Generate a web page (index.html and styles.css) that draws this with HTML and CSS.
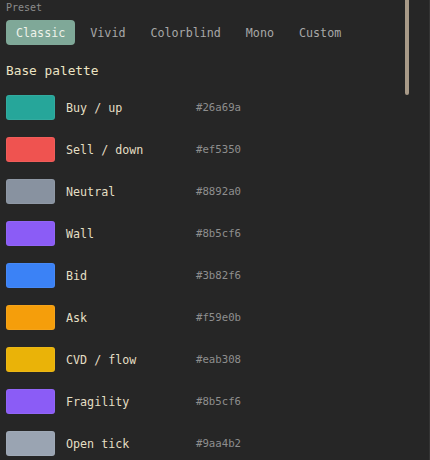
FILE: index.html
```html
<!DOCTYPE html>
<html>
<head>
<meta charset="utf-8">
<link rel="stylesheet" href="styles.css">
</head>
<body>
<div class="frame">
  <div class="content">
    <div class="section-label">Preset</div>
    <div class="presets">
      <button class="preset active">Classic</button>
      <button class="preset">Vivid</button>
      <button class="preset">Colorblind</button>
      <button class="preset">Mono</button>
      <button class="preset">Custom</button>
    </div>
    <div class="heading">Base palette</div>
    <div class="palette">
      <div class="row"><span class="swatch" style="background:#26a69a"></span><span class="name">Buy / up</span><span class="hex">#26a69a</span></div>
      <div class="row"><span class="swatch" style="background:#ef5350"></span><span class="name">Sell / down</span><span class="hex">#ef5350</span></div>
      <div class="row"><span class="swatch" style="background:#8892a0"></span><span class="name">Neutral</span><span class="hex">#8892a0</span></div>
      <div class="row"><span class="swatch" style="background:#8b5cf6"></span><span class="name">Wall</span><span class="hex">#8b5cf6</span></div>
      <div class="row"><span class="swatch" style="background:#3b82f6"></span><span class="name">Bid</span><span class="hex">#3b82f6</span></div>
      <div class="row"><span class="swatch" style="background:#f59e0b"></span><span class="name">Ask</span><span class="hex">#f59e0b</span></div>
      <div class="row"><span class="swatch" style="background:#eab308"></span><span class="name">CVD / flow</span><span class="hex">#eab308</span></div>
      <div class="row"><span class="swatch" style="background:#8b5cf6"></span><span class="name">Fragility</span><span class="hex">#8b5cf6</span></div>
      <div class="row"><span class="swatch" style="background:#9aa4b2"></span><span class="name">Open tick</span><span class="hex">#9aa4b2</span></div>
    </div>
  </div>
  <div class="track"><div class="thumb"></div></div>
</div>
</body>
</html>
```
FILE: styles.css
```css
html, body {
  margin: 0;
  padding: 0;
  background: #262626;
}
body {
  font-family: "DejaVu Sans Mono", "Liberation Mono", monospace;
}
.frame {
  width: 430px;
  height: 460px;
  display: flex;
  box-sizing: border-box;
  border-right: 1px solid #343434;
  overflow: hidden;
}
.content {
  width: 405px;
  box-sizing: border-box;
  padding: 1px 6px 0;
}
.track {
  width: 4px;
  height: 460px;
}
.thumb {
  width: 4px;
  height: 95px;
  background: #a89a88;
  border-radius: 0 0 2px 2px;
}
.section-label {
  font-size: 10px;
  color: #8c8c8c;
  line-height: 14px;
}
.presets {
  display: flex;
  gap: 5px;
  margin-top: 5px;
}
.preset {
  font-family: inherit;
  font-size: 11.7px;
  height: 25px;
  padding: 0 10px;
  border: 0;
  border-radius: 4px;
  background: transparent;
  color: #a8a8a8;
}
.preset.active {
  background: #7fa898;
  color: #eef2ea;
}
.heading {
  margin-top: 18px;
  font-size: 12.8px;
  color: #ece4c4;
  line-height: 16px;
}
.palette {
  display: flex;
  flex-direction: column;
  gap: 17px;
  margin-top: 16px;
}
.row {
  display: flex;
  align-items: center;
  height: 25px;
}
.swatch {
  width: 49px;
  height: 25px;
  border-radius: 3px;
  box-shadow: inset 0 0 0 1px rgba(255,255,255,0.06);
  flex: none;
}
.name {
  margin-left: 11px;
  width: 130px;
  font-size: 11.7px;
  color: #e4dfc4;
}
.hex {
  font-size: 10.7px;
  color: #8e8e8e;
}
```
